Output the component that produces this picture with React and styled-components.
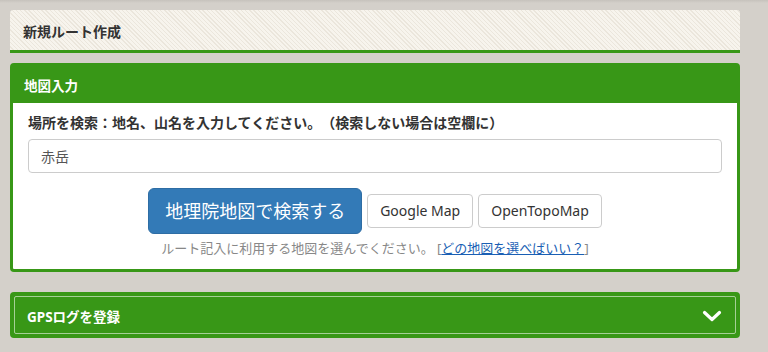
import React from "react";
import styled, { createGlobalStyle } from "styled-components";

const Global = createGlobalStyle`
  html, body { margin: 0; padding: 0; }
  body {
    background: linear-gradient(#c6c2bc 0px, #d4d0ca 3px) no-repeat, #d4d0ca;
    font-family: "Noto Sans", "Noto Sans CJK JP", sans-serif;
    color: #333;
    text-spacing-trim: space-all;
  }
`;

const GREEN = "#389717";

const Page = styled.div`
  width: 730px;
  padding: 10px;
  display: flex;
  flex-direction: column;
`;

const TitleCard = styled.div`
  height: 43px;
  border-radius: 4px 4px 0 0;
  border-bottom: 3px solid ${GREEN};
  background-color: #f6f3ec;
  background-image: repeating-linear-gradient(
    45deg,
    #f7f4ed 0px,
    #f7f4ed 2px,
    #ebe6dc 2px,
    #ebe6dc 3px
  );
  display: flex;
  align-items: center;
  padding: 2px 13px 0;
  box-sizing: border-box;
`;

const Title = styled.h1`
  margin: 0;
  font-size: 14px;
  font-weight: bold;
  color: #333;
`;

const Panel = styled.section`
  margin-top: ${(p) => p.$gap}px;
  border: 3px solid ${GREEN};
  border-radius: 4px;
  background: ${GREEN};
  overflow: hidden;
`;

const PanelHead = styled.div`
  height: 36px;
  display: flex;
  align-items: center;
  padding: 1px 11px 0;
  color: #fff;
  font-size: 13.5px;
  font-weight: bold;
`;

const PanelBody = styled.div`
  background: #fff;
  padding: 10px 15px 12px;
  display: flex;
  flex-direction: column;
`;

const Label = styled.label`
  font-size: 14px;
  font-weight: bold;
  line-height: 20px;
  color: #333;
  text-spacing-trim: space-all;
`;

const Input = styled.input`
  margin-top: 6px;
  height: 34px;
  box-sizing: border-box;
  border: 1px solid #ccc;
  border-radius: 4px;
  padding: 0 12px;
  font-family: "Noto Sans", "Noto Sans CJK JP", sans-serif;
  font-size: 14px;
  color: #555;
  outline: none;
`;

const ButtonRow = styled.div`
  margin-top: 15px;
  display: flex;
  justify-content: center;
  align-items: center;
  gap: 5px;
`;

const Button = styled.button`
  font-family: "Noto Sans", "Noto Sans CJK JP", sans-serif;
  box-sizing: border-box;
  cursor: pointer;
  border-radius: ${(p) => (p.$primary ? 6 : 4)}px;
  border: 1px solid ${(p) => (p.$primary ? "#2e6da4" : "#ccc")};
  background: ${(p) => (p.$primary ? "#337ab7" : "#fff")};
  color: ${(p) => (p.$primary ? "#fff" : "#333")};
  font-size: ${(p) => (p.$primary ? 18 : 14)}px;
  height: ${(p) => (p.$primary ? 46 : 34)}px;
  padding: ${(p) => (p.$primary ? "0 16px" : "0 12px")};
  line-height: 1;
`;

const Help = styled.p`
  margin: 5px 0 0;
  text-align: center;
  font-size: 13px;
  line-height: 18px;
  color: #888;
  text-spacing-trim: space-all;
`;

const HelpLink = styled.a`
  color: #1a5fb4;
  text-decoration: underline;
`;

const CollapseHead = styled.div`
  height: 35px;
  margin: 1px;
  border: 1px solid rgba(255, 255, 255, 0.55);
  border-radius: 2px;
  display: flex;
  align-items: center;
  justify-content: space-between;
  padding: 1px 13px 0 12px;
  color: #fff;
  font-size: 13.5px;
  font-weight: bold;
`;

const Chevron = () => (
  <svg width="20" height="14" viewBox="0 0 20 14" aria-hidden="true">
    <path
      d="M2.5 3.5 L10 10.5 L17.5 3.5"
      fill="none"
      stroke="#fff"
      strokeWidth="3.2"
      strokeLinecap="round"
      strokeLinejoin="round"
    />
  </svg>
);

export default function App() {
  return (
    <>
      <Global />
      <Page>
        <TitleCard>
          <Title>新規ルート作成</Title>
        </TitleCard>
        <Panel $gap={10}>
          <PanelHead>地図入力</PanelHead>
          <PanelBody>
            <Label>場所を検索：地名、山名を入力してください。（検索しない場合は空欄に）</Label>
            <Input defaultValue="赤岳" />
            <ButtonRow>
              <Button $primary>地理院地図で検索する</Button>
              <Button>Google Map</Button>
              <Button>OpenTopoMap</Button>
            </ButtonRow>
            <Help>
              ルート記入に利用する地図を選んでください。 [
              <HelpLink href="#">どの地図を選べばいい？</HelpLink>]
            </Help>
          </PanelBody>
        </Panel>
        <Panel $gap={20}>
          <CollapseHead>
            <span>GPSログを登録</span>
            <Chevron />
          </CollapseHead>
        </Panel>
      </Page>
    </>
  );
}
